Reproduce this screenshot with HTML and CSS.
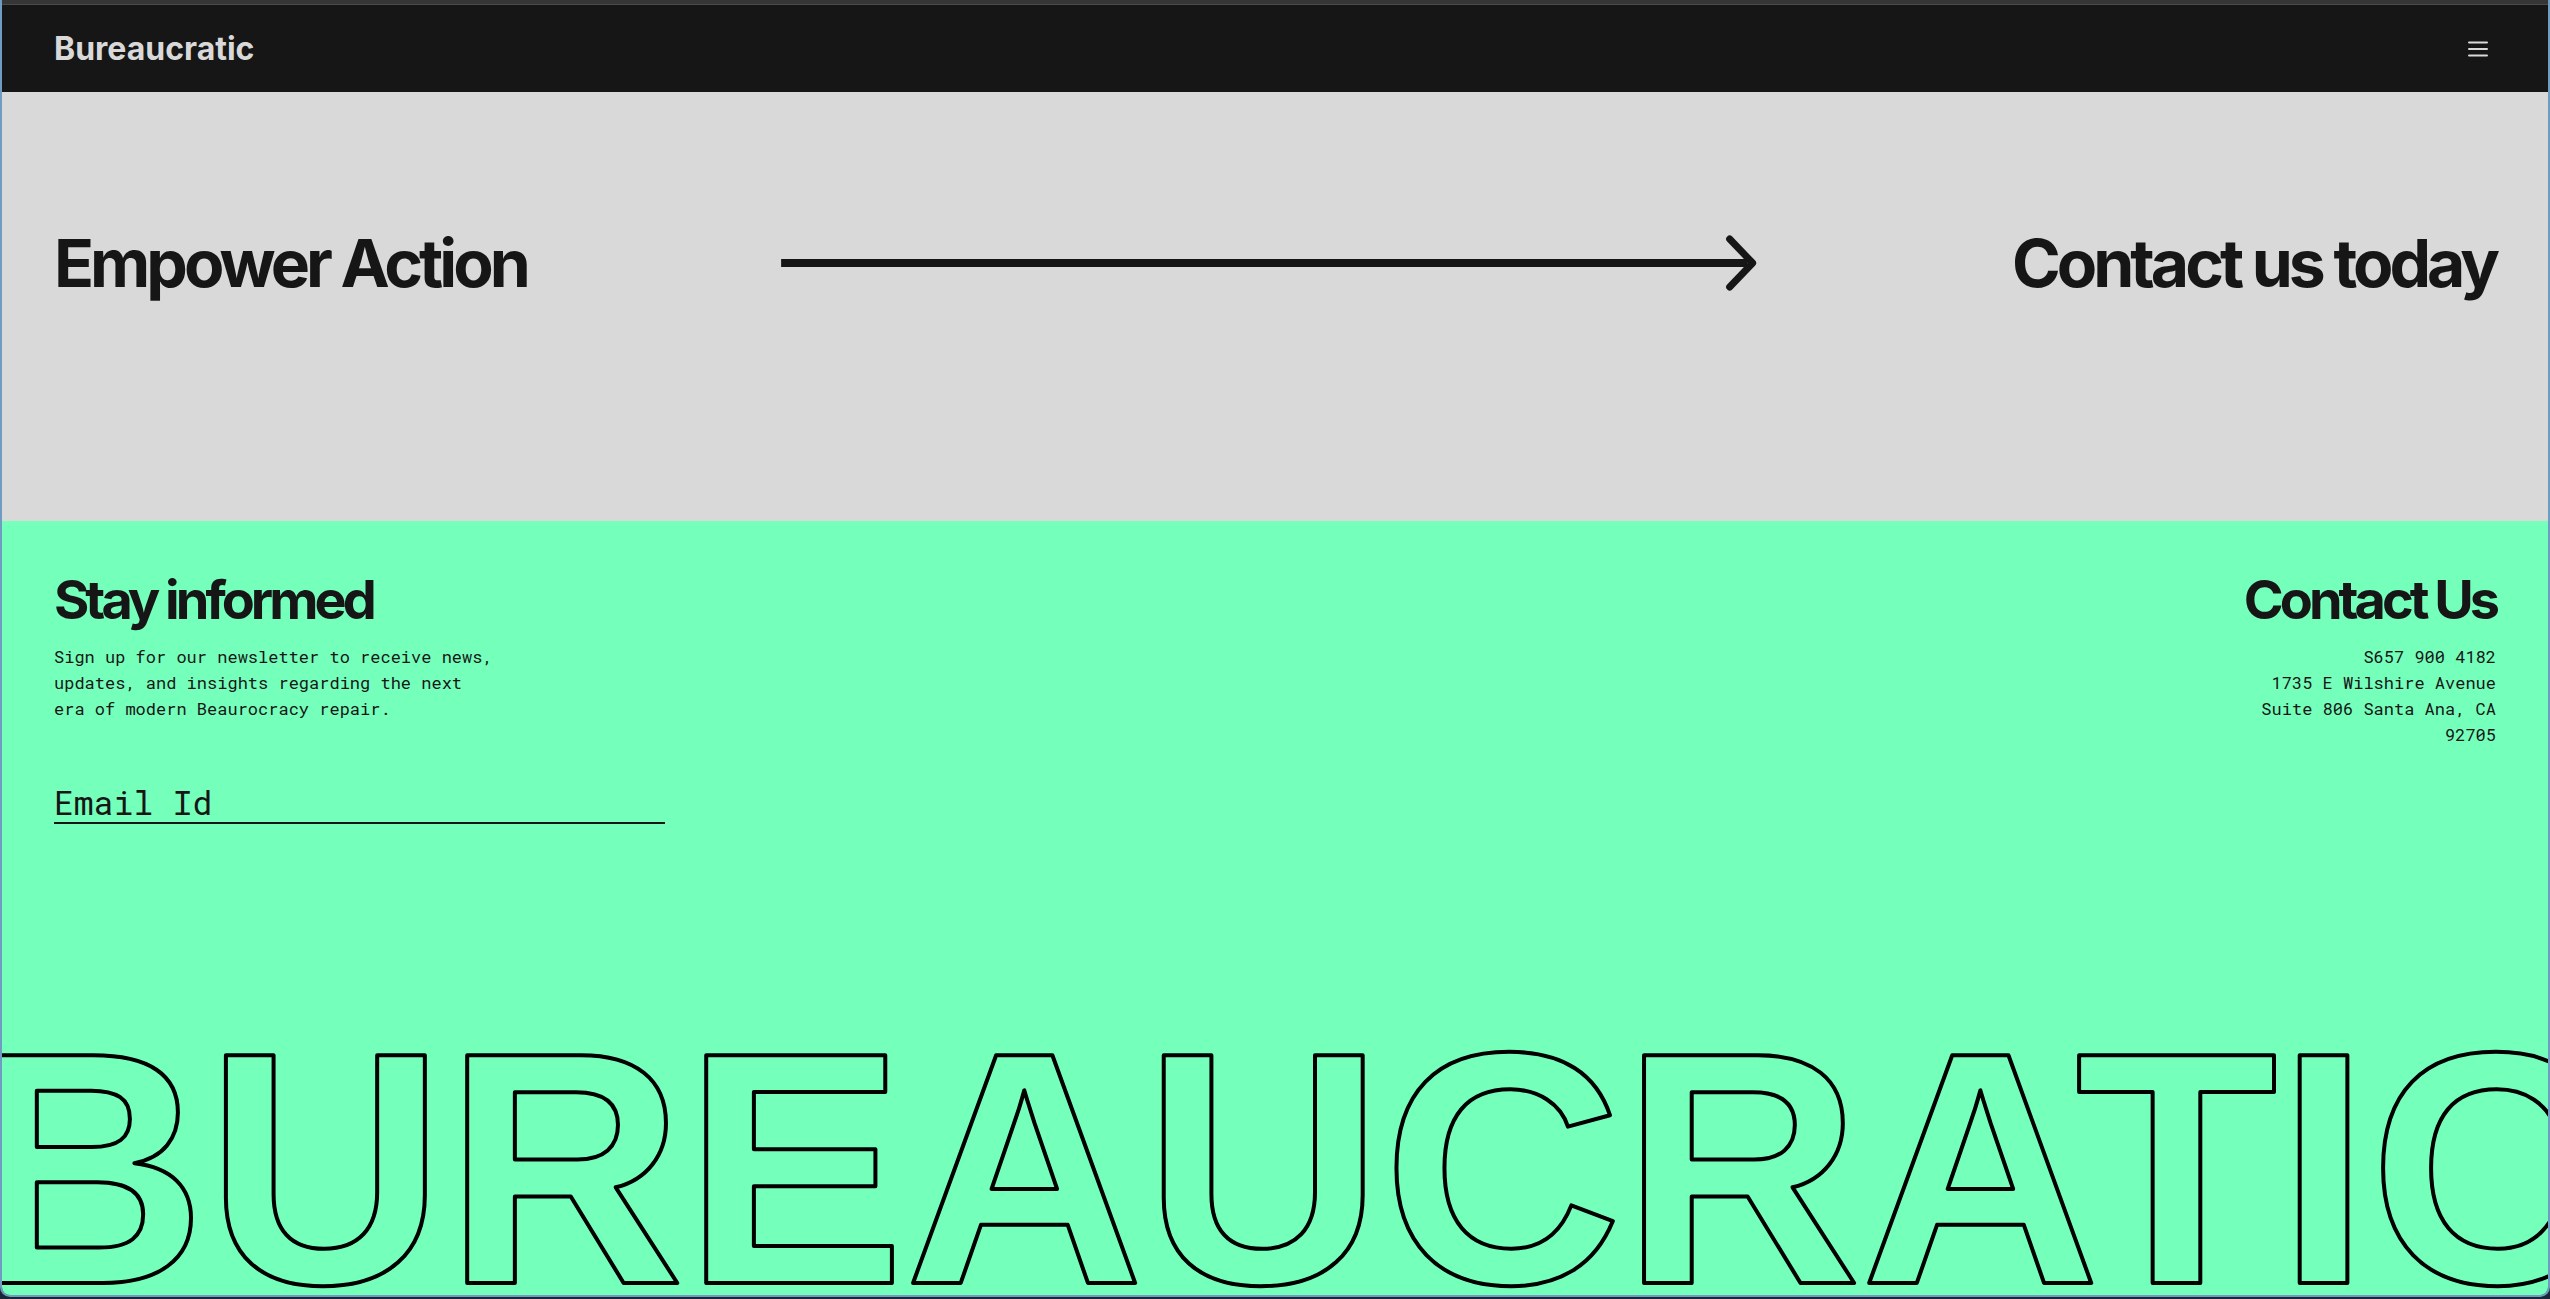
FILE: index.html
```
<!DOCTYPE html>
<html lang="en">
<head>
<meta charset="utf-8">
<meta name="viewport" content="width=device-width, initial-scale=1">
<title>Bureaucratic</title>
<link rel="stylesheet" href="styles.css">
</head>
<body>
<div class="window">
  <header class="header">
    <a class="brand" href="#">Bureaucratic</a>
    <button class="menu-button" type="button" aria-label="Menu">
      <svg viewBox="0 0 20 16" aria-hidden="true"><path d="M1 1.5h18M1 8h18M1 14.5h18"/></svg>
    </button>
  </header>
  <main class="hero">
    <h1 class="hero-title">Empower Action</h1>
    <svg class="arrow" viewBox="0 0 976 56" aria-hidden="true"><path d="M0 28h966"/><path class="arrow-head" d="M948 4l23 24-23 24"/></svg>
    <a class="hero-title" href="#contact">Contact us today</a>
  </main>
  <footer class="footer">
    <div class="columns">
      <section class="newsletter">
        <h2 class="title">Stay informed</h2>
        <p class="copy">Sign up for our newsletter to receive news, updates, and insights regarding the next era of modern Beaurocracy repair.</p>
        <form>
          <input class="email" type="email" placeholder="Email Id" aria-label="Email Id">
        </form>
      </section>
      <section class="contact" id="contact">
        <h2 class="title">Contact Us</h2>
        <address class="copy">S657 900 4182<br>1735 E Wilshire Avenue<br>Suite 806 Santa Ana, CA<br>92705</address>
      </section>
    </div>
    <svg class="wordmark" role="img" aria-label="Bureaucratic"><text x="-35" y="100%" dy="-12">BUREAUCRATIC</text></svg>
  </footer>
</div>
</body>
</html>
```
FILE: styles.css
```
:root {
  --ink: #161616;
  --paper: #d9d9d9;
  --mint: #74ffbb;
  --edge: #6f9cc0;
  --mono: "Roboto Mono", "Liberation Mono", monospace;
}

* {
  box-sizing: border-box;
}

body {
  margin: 0;
  background: #1b2638;
  color: var(--ink);
  font-family: Inter, "Liberation Sans", sans-serif;
}

h1, h2, p {
  margin: 0;
}

.window {
  display: flex;
  flex-direction: column;
  min-height: calc(100vh - 2px);
  border: 2px solid var(--edge);
  border-top: 0;
  border-radius: 0 0 10px 10px;
  overflow: hidden;
}

.header {
  display: flex;
  align-items: center;
  justify-content: space-between;
  height: 92px;
  padding: 6px 60px 0 52px;
  background: linear-gradient(#363636 4px, #4a4a4a 4px, #4a4a4a 5px, var(--ink) 5px);
}

.brand {
  color: var(--paper);
  font-size: 32px;
  font-weight: 700;
  line-height: 40px;
  text-decoration: none;
}

.menu-button {
  display: flex;
  padding: 0;
  border: 0;
  background: none;
}

.menu-button svg {
  width: 20px;
  height: 16px;
  fill: none;
  stroke: var(--paper);
  stroke-width: 2;
  stroke-linecap: round;
}

.hero {
  display: flex;
  align-items: center;
  justify-content: space-between;
  height: 429px;
  padding: 0 52px 87px;
  background: var(--paper);
}

.hero-title {
  color: var(--ink);
  font-size: 66px;
  font-weight: 700;
  line-height: 80px;
  letter-spacing: -4px;
  text-decoration: none;
}

.arrow {
  width: 40%;
  fill: none;
  stroke: var(--ink);
  stroke-width: 8;
}

.arrow-head {
  stroke-width: 7;
  stroke-linecap: round;
  stroke-linejoin: round;
}

.footer {
  display: flex;
  flex: 1;
  flex-direction: column;
  justify-content: space-between;
  background: var(--mint);
}

.columns {
  display: flex;
  justify-content: space-between;
  padding: 44px 52px 0;
}

.newsletter {
  width: 25%;
}

.title {
  font-size: 54px;
  font-weight: 700;
  line-height: 70px;
  letter-spacing: -4px;
}

.copy {
  max-width: 444px;
  padding-top: 9px;
  font-family: var(--mono);
  font-size: 17px;
  font-style: normal;
  line-height: 26px;
}

.contact {
  text-align: right;
}

.email {
  display: block;
  width: 100%;
  height: 44px;
  margin-top: 58px;
  padding: 2px 0 0;
  border: 0;
  border-bottom: 2px solid var(--ink);
  border-radius: 0;
  background: none;
  color: var(--ink);
  font-family: var(--mono);
  font-size: 33px;
}

.email::placeholder {
  color: var(--ink);
  opacity: 1;
}

.wordmark {
  display: block;
  width: 100%;
  height: 1em;
  fill: none;
  stroke: #000;
  stroke-width: 4;
  stroke-linejoin: round;
  font-family: "Liberation Sans", Arial, sans-serif;
  font-size: calc((100vw - 4px) * 0.13);
  font-weight: 700;
}
```
